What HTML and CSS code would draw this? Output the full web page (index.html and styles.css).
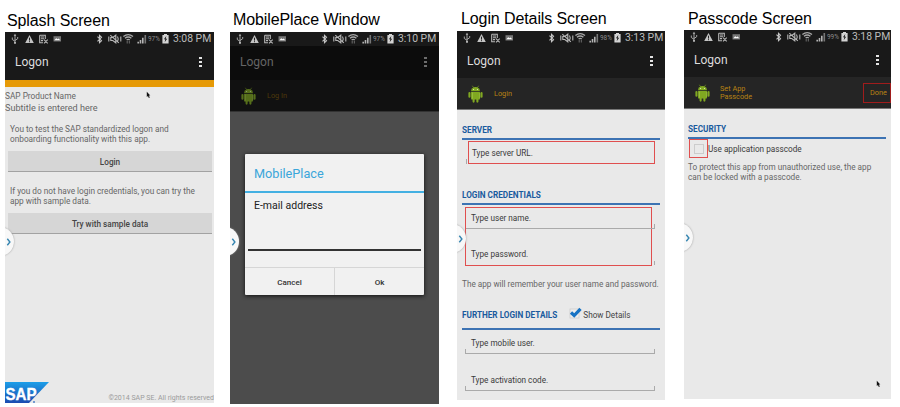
FILE: index.html
```html
<!DOCTYPE html>
<html lang="en">
<head>
<meta charset="utf-8">
<title>Logon screens</title>
<link rel="stylesheet" href="styles.css">
</head>
<body>
<svg class="defs" aria-hidden="true">
  <symbol id="left-icons" viewBox="0 0 60 14">
    <g fill="none" stroke="#b4b4b4" stroke-width="0.9">
      <path d="M10 3v8M7.3 5.5v2L10 9.3M12.7 5v1.7L10 8.5"/>
    </g>
    <path d="M10 1.8l1.3 2H8.700zM9 10h2v1.800H9z" fill="#b4b4b4"/>
    <path d="M24.500 3l4.300 8h-8.600z" fill="#c4c4c4"/>
    <path d="M24.500 5.700v2.900M24.500 9.200v1" stroke="#222" stroke-width="1"/>
    <path d="M34.700 3.300h5.600v3.700M38 10.700h-3.300V3.300M36 5h3M36 6.800h3M36 8.600h2M39 7.700l3.700 3.600M42.700 7.700L39 11.300" fill="none" stroke="#b8b8b8" stroke-width="1.1"/>
    <path d="M48.500 4.200h7.500v5.300h-7.500z" fill="#777"/>
    <path d="M49.300 8.300l2-2 1.200 1 1-.8 1.800 1.800z" fill="#fff"/>
  </symbol>
  <symbol id="right-icons" viewBox="0 0 52 14">
    <path d="M2.500 4.700l4 4-2 2V3.300l2 2-4 4" fill="none" stroke="#c4c4c4" stroke-width="1.1"/>
    <path d="M13.800 4.500v5M25.800 4.500v5M15.800 5.500h2l3-2.300v7.600l-3-2.300h-2zM15.300 3.200l8.500 7.600M22.500 4.500q1.500 2.500 0 5" fill="none" stroke="#b8b8b8" stroke-width="1.1"/>
    <path d="M28.400 4.500q4.800-3.800 9.600 0M30 6.300q3.200-2.500 6.400 0M31.600 8q1.600-1.200 3.200 0" fill="none" stroke="#a8a8a8" stroke-width="1.400"/>
    <path d="M32.200 9v2.500M34.300 9v2.500" stroke="#777" stroke-width="0.900"/>
    <path d="M43.200 11.500V9.700M45.500 11.500V8M47.800 11.500V5.800" stroke="#b4b4b4" stroke-width="1.600"/>
    <path d="M50.300 11.500V3" stroke="#777" stroke-width="1.600"/>
  </symbol>
  <symbol id="battery" viewBox="0 0 7 10">
    <path d="M2 0h3v1h1.600v8.500H.4V1H2z" fill="#d4d4d4"/>
    <path d="M4.300 2L1.900 5.300h1.400L2.700 8.300l2.500-3.600H3.800z" fill="#222"/>
  </symbol>
  <symbol id="android" viewBox="0 0 14 17">
    <g fill="#80a821">
      <path d="M2.800 6a4.200 4 0 0 1 8.400 0z"/>
      <path d="M2.800 6.700h8.400v6.300q0 .8-.8.800H3.600q-.8 0-.8-.8z"/>
      <rect x=".3" y="6.500" width="2" height="5.600" rx="1"/>
      <rect x="11.700" y="6.500" width="2" height="5.600" rx="1"/>
      <rect x="4.200" y="12.500" width="2" height="4.200" rx="1"/>
      <rect x="7.800" y="12.500" width="2" height="4.200" rx="1"/>
    </g>
    <path d="M4 .7l1.300 2M10 .7L8.700 2.700" stroke="#80a821" stroke-width=".6"/>
    <circle cx="5.200" cy="4.300" r=".5" fill="#e8f0d8"/><circle cx="8.800" cy="4.300" r=".5" fill="#e8f0d8"/>
    <path d="M4.200 7v6M11 7.500v5" stroke="#a5c94a" stroke-width=".6"/>
  </symbol>
  <symbol id="chevron" viewBox="0 0 6 8">
    <path d="M1.300 .8L3.900 4 1.300 7.200" fill="none" stroke="#3585b0" stroke-width="1.400"/>
  </symbol>
  <symbol id="pointer" viewBox="0 0 5 8">
    <path d="M.8.700l3.500 3.800-1.500.1 1 2-1 .5-.8-2-1.200.8z" fill="#111"/>
  </symbol>
</svg>

<main class="board">
  <section class="shot shot-splash">
    <h2 class="caption">Splash Screen</h2>
    <div class="phone">
      <div class="status"><svg class="left"><use href="#left-icons"/></svg><svg class="right"><use href="#right-icons"/></svg><span class="pct">97%</span><svg class="bat"><use href="#battery"/></svg><time>3:08 PM</time></div>
      <div class="appbar"><span>Logon</span><i class="dots"></i></div>
      <div class="orange"></div>
      <div class="product">SAP Product Name</div>
      <div class="subtitle">Subtitle is entered here</div>
      <p class="copy first">You to test the SAP standardized logon and<br>onboarding functionality with this app.</p>
      <button class="wide">Login</button>
      <p class="copy second">If you do not have login credentials, you can try the<br>app with sample data.</p>
      <button class="wide">Try with sample data</button>
      <footer class="legal">
        <svg class="sap" viewBox="0 0 44 21">
          <defs><linearGradient id="blue" x1="0" y1="0" x2="0" y2="1"><stop offset="0" stop-color="#1c9ee8"/><stop offset="1" stop-color="#1b4bb0"/></linearGradient></defs>
          <path d="M0 0h44L24 21H0z" fill="url(#blue)"/>
          <text x="0.500" y="17.500" textLength="31" lengthAdjust="spacingAndGlyphs">SAP</text>
          <circle cx="29" cy="20" r="1" fill="#4c7fc4"/>
        </svg>
        <span>©2014 SAP SE. All rights reserved</span>
      </footer>
      <div class="handle"><svg><use href="#chevron"/></svg></div>
      <svg class="pointer"><use href="#pointer"/></svg>
    </div>
  </section>

  <section class="shot shot-place">
    <h2 class="caption">MobilePlace Window</h2>
    <div class="phone dimmed">
      <div class="status"><svg class="left"><use href="#left-icons"/></svg><svg class="right"><use href="#right-icons"/></svg><span class="pct">97%</span><svg class="bat"><use href="#battery"/></svg><time>3:10 PM</time></div>
      <div class="appbar"><span>Logon</span><i class="dots"></i></div>
      <div class="subbar"><svg class="robot"><use href="#android"/></svg><span>Log In</span></div>
      <div class="dialog">
        <h3>MobilePlace</h3>
        <label>E-mail address</label>
        <div class="entry"></div>
        <div class="actions"><button>Cancel</button><button>Ok</button></div>
      </div>
      <div class="handle"><svg><use href="#chevron"/></svg></div>
    </div>
  </section>

  <section class="shot shot-login">
    <h2 class="caption">Login Details Screen</h2>
    <div class="phone">
      <div class="status"><svg class="left"><use href="#left-icons"/></svg><svg class="right"><use href="#right-icons"/></svg><span class="pct">98%</span><svg class="bat"><use href="#battery"/></svg><time>3:13 PM</time></div>
      <div class="appbar"><span>Logon</span><i class="dots"></i></div>
      <div class="subbar"><svg class="robot"><use href="#android"/></svg><span>Login</span></div>
      <div class="form">
        <h4 class="server">Server</h4>
        <div class="url"><div class="marked">Type server URL.</div></div>
        <h4 class="cred">Login credentials</h4>
        <div class="pair"><div class="field">Type user name.</div><div class="field last">Type password.</div></div>
        <p class="note">The app will remember your user name and password.</p>
        <h4 class="further"><span>Further login details</span>
          <svg class="tick" viewBox="0 0 13 12"><rect x="1" y="2" width="9" height="9" fill="#eee" stroke="#ccc" stroke-width=".8"/><path d="M2 5.500l3.200 3L11.500 1.800" fill="none" stroke="#1773c4" stroke-width="3.200"/></svg>
          <em>Show Details</em></h4>
        <div class="field plain">Type mobile user.</div>
        <div class="field plain">Type activation code.</div>
      </div>
      <div class="handle"><svg><use href="#chevron"/></svg></div>
    </div>
  </section>

  <section class="shot shot-pass">
    <h2 class="caption">Passcode Screen</h2>
    <div class="phone">
      <div class="status"><svg class="left"><use href="#left-icons"/></svg><svg class="right"><use href="#right-icons"/></svg><span class="pct">99%</span><svg class="bat"><use href="#battery"/></svg><time>3:18 PM</time></div>
      <div class="appbar"><span>Logon</span><i class="dots"></i></div>
      <div class="subbar"><svg class="robot"><use href="#android"/></svg><span>Set App<br>Passcode</span><b class="done">Done</b></div>
      <div class="form">
        <h4 class="server">Security</h4>
        <div class="option"><span class="ring"><i></i></span><span>Use application passcode</span></div>
        <p class="protect">To protect this app from unauthorized use, the app<br>can be locked with a passcode.</p>
      </div>
      <div class="handle"><svg><use href="#chevron"/></svg></div>
      <svg class="pointer"><use href="#pointer"/></svg>
    </div>
  </section>
</main>
</body>
</html>
```
FILE: styles.css
```css
* { box-sizing: border-box; }
body { margin: 0; background: #fff; font-family: Roboto, sans-serif; }
.defs { display: block; width: 0; height: 0; }
.board { display: flex; width: 900px; height: 407px; overflow: hidden; align-items: flex-start; }
.shot { flex: none; }
.shot-splash { margin-left: 5px; width: 225px; }
.shot-place { width: 227px; }
.shot-login { width: 227px; }
.shot-pass { width: 207px; }
.caption { margin: 0; height: 32px; padding: 12px 0 0 2px; font: 16px/18px "Liberation Sans", sans-serif; letter-spacing: -0.1px; color: #000; white-space: nowrap; }
.shot-place .caption { padding: 11px 0 0 3px; }
.shot-login .caption { height: 31px; padding: 10px 0 0 4px; }
.shot-pass .caption { height: 30px; padding: 10px 0 0 4px; }
.phone { position: relative; display: flex; flex-direction: column; width: 209px; height: 371px; background: #e9e9e9; overflow: hidden; color: #666; }
.shot-place .phone { height: 372px; }
.shot-login .phone { width: 208px; height: 369px; }
.shot-pass .phone { width: 207px; height: 369px; }

.status { display: flex; flex: none; align-items: center; height: 14px; background: #191919; white-space: nowrap; }
.status .left { flex: none; width: 60px; height: 14px; margin-right: 30px; }
.status .right { flex: none; width: 52px; height: 14px; }
.status .pct { flex: none; width: 15px; padding-left: 1px; font-size: 6.4px; color: #8c8c8c; }
.status .bat { flex: none; width: 7px; height: 10px; margin-right: 4px; }
.status time { font-size: 10.4px; line-height: 14px; color: #bdbdbd; }
.appbar { display: flex; flex: none; justify-content: space-between; align-items: center; height: 34px; padding: 0 12px 2px 10px; background: #191919; font-size: 12px; color: #ddd; }
.dots { width: 3px; height: 10px; background: linear-gradient(#e4e4e4 0 2px, transparent 2px 4px, #e4e4e4 4px 6px, transparent 6px 8px, #e4e4e4 8px); }
.shot-login .appbar, .shot-pass .appbar { height: 33px; }
.subbar { display: flex; flex: none; align-items: center; height: 32px; background: #252525; border-bottom: 1px solid #777; padding-left: 11px; font-size: 7.3px; line-height: 8px; color: #b98314; }
.robot { width: 15px; height: 18px; margin-right: 11px; }
.shot-pass .robot { margin-right: 10px; }
.orange { flex: none; height: 7px; background: #e69a07; }

.product { margin-top: 4px; font-size: 8.3px; line-height: 11px; }
.subtitle { font-size: 9.1px; line-height: 12px; }
.copy { margin: 0; padding-left: 5px; font-size: 8.25px; line-height: 10px; white-space: nowrap; }
.copy.first { margin-top: 10px; }
.copy.second { margin-top: 14px; }
.wide { margin: 7px 2px 0 3px; height: 21px; padding: 1px 0 0; border: 0; border-bottom: 1px solid #a2a2a2; background: #d6d6d6; font: 500 8.2px Roboto, sans-serif; color: #444; }
.legal { display: flex; justify-content: space-between; align-items: flex-end; margin-top: auto; height: 21px; font-size: 7px; line-height: 9px; color: #9b9b9b; white-space: nowrap; }
.sap { width: 44px; height: 21px; flex: none; }
.sap text { font: bold 17px "Liberation Sans", sans-serif; fill: #fff; stroke: #fff; stroke-width: .4px; }
.handle { position: absolute; left: -19px; top: 195px; width: 28px; height: 29px; border-radius: 50%; background: #f8f8f8; box-shadow: 0 0 2px #999; }
.handle svg { display: block; width: 6px; height: 8px; margin: 11px 0 0 20px; }
.shot-login .handle, .shot-pass .handle { top: 193px; }
.pointer { position: absolute; left: 141px; top: 59px; width: 5px; height: 8px; }
.shot-pass .pointer { left: 192px; top: 350px; }

.dimmed { background: #4c4c4c; }
.dimmed .appbar { background: #0c0c0c; color: #666; }
.dimmed .dots { opacity: .45; }
.dimmed .subbar { background: #111; color: #4f3a0b; border-color: #333; }
.dimmed .robot { opacity: .62; }
.dialog { display: flex; flex-direction: column; margin: 42px 15px 0; height: 141px; background: #f1f1f1; box-shadow: 0 1px 4px #111; border-radius: 1px; }
.dialog h3 { margin: 0; height: 39px; padding: 1px 0 0 9px; font-size: 12.7px; font-weight: 400; line-height: 37px; color: #3ba6da; border-bottom: 2px solid #43b0e2; }
.dialog label { padding: 6px 9px 0; font-size: 10.5px; line-height: 14px; color: #222; }
.dialog .entry { height: 38px; margin: 0 3px; border-bottom: 2px solid #333; }
.dialog .actions { display: flex; height: 28px; margin-top: auto; border-top: 1px solid #d6d6d6; }
.actions button { flex: 1; padding: 1px 0 0; border: 0; background: none; font: 500 8px Roboto, sans-serif; color: #333; }
.actions button + button { border-left: 1px solid #d6d6d6; }

.form { display: flex; flex-direction: column; padding: 0 5px; font-size: 8.2px; color: #3b3b3b; white-space: nowrap; }
.shot-pass .form { padding: 0 5px 0 4px; }
.form h4 { margin: 0; height: 16px; font-size: 8.2px; font-weight: 700; line-height: 12px; text-transform: uppercase; color: #195b9e; border-bottom: 2px solid #3d73b3; }
.form .server { margin-top: 14px; }
.url { margin: 1px 5px 0 4px; padding-left: 2px; border-left: 1px solid #bbb; border-image: linear-gradient(transparent 75%, #aaa 75%) 1; }
.marked { height: 23px; padding-left: 3px; border: 1px solid #e04f4f; line-height: 22px; margin-left: -1px; }
.form .cred { margin-top: 25px; }
.pair { margin: 2px 8px 0 3px; height: 59px; border: 1px solid #e04f4f; }
.field { height: 21px; padding-left: 5px; line-height: 20px; }
.pair .field { margin-right: -4px; border-style: solid; border-width: 0 1px 1px 0; border-image: linear-gradient(transparent 78%, #aaa 78%) 1; }
.pair .field.last { height: 21px; margin-top: 15px; border-width: 0 1px 0 0; }
.note { margin: 12px 0 0; line-height: 12px; color: #666; }
.form .further { display: flex; height: 23px; margin-top: 17px; line-height: 16px; }
.tick { width: 13px; height: 12px; margin: 0 1px 0 12px; }
.further em { font-style: normal; font-weight: 400; text-transform: none; color: #444; }
.field.plain { margin: 3px 5px 0 3px; padding-left: 5px; border-image: linear-gradient(transparent 78%, #aaa 78%) 1; border-width: 0 1px 1px; border-style: solid; }
.field.plain + .plain { margin-top: 16px; }

.done { margin-left: auto; width: 28px; height: 20px; border: 1px solid #a01c1c; font-weight: 400; line-height: 18px; padding-left: 6px; }
.option { display: flex; height: 20px; line-height: 20px; }
.ring { flex: none; width: 19px; height: 19px; margin-left: 1px; padding: 4px; border: 1px solid #e04f4f; }
.ring i { display: block; width: 10px; height: 10px; border: 1px solid #ccc; }
.protect { margin: 3px 0 0; line-height: 10px; color: #666; }
```
